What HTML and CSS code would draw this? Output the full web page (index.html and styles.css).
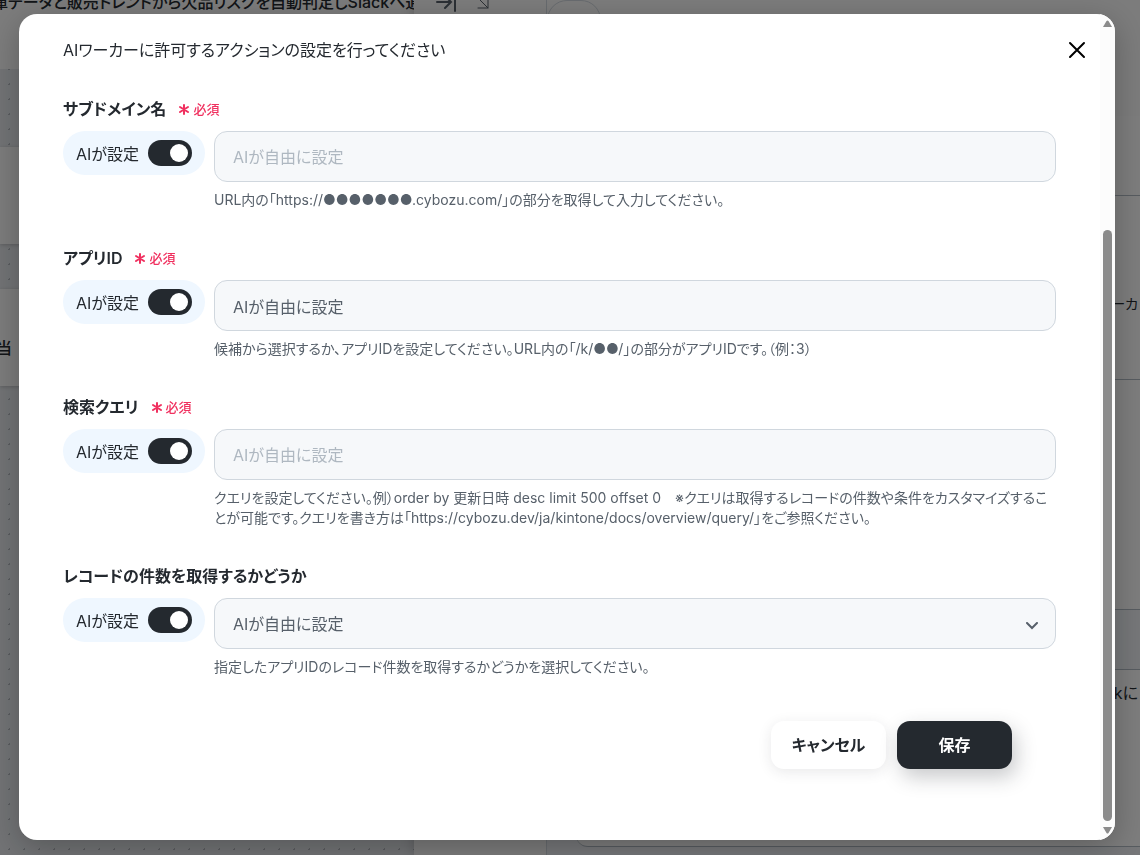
FILE: index.html
```
<!DOCTYPE html>
<html lang="ja">
  <head>
    <meta charset="UTF-8" />
    <meta name="viewport" content="width=device-width, initial-scale=1.0" />
    <title>アクションの設定</title>
    <link rel="stylesheet" href="styles.css">
  </head>
  <body>
    <div class="page" aria-hidden="true">
      <div class="workspace">
        <div class="workspace-title">庫データと販売トレンドから欠品リスクを自動判定しSlackへ通</div>
        <div class="canvas">
          <div class="node"></div>
          <div class="node">当</div>
        </div>
      </div>
      <div class="side">
        <svg width="24" height="24" viewBox="0 0 24 24"><path d="M3 12h14M11 6l6 6-6 6M21 3v18" /></svg>
        <svg class="thin" width="20" height="20" viewBox="0 0 20 20"><path d="M3 3l13 13M16 6v10H6" /></svg>
      </div>
      <div class="detail">
        <div class="tab"></div>
        <div class="detail-body">
          <div class="row row-first"></div>
          <div class="row row-worker">ワーカ</div>
          <div class="row row-blank"></div>
          <div class="row row-head"></div>
          <div class="row row-last">Slackに</div>
        </div>
      </div>
    </div>

    <div class="overlay">
      <div class="modal" role="dialog" aria-modal="true" aria-labelledby="modal-title">
        <form class="modal-content">
          <div class="modal-header">
            <h2 id="modal-title">AIワーカーに許可するアクションの設定を行ってください</h2>
            <button type="button" class="close-btn" aria-label="閉じる">
              <svg width="24" height="24" viewBox="0 0 24 24"><path d="M5 5l14 14M19 5L5 19" /></svg>
            </button>
          </div>

          <div class="field">
            <label class="field-label" for="subdomain">サブドメイン名
              <span class="required"><svg width="12" height="12" viewBox="0 0 12 12"><path d="M6 2v9M2 4l8 5M10 4l-8 5" /></svg>必須</span>
            </label>
            <div class="field-row">
              <label class="ai-toggle">AIが設定 <input type="checkbox" role="switch" checked></label>
              <div class="field-main">
                <input class="control" id="subdomain" type="text" placeholder="AIが自由に設定">
                <p class="hint">URL内の「https://●●●●●●●.cybozu.com/」の部分を取得して入力してください。</p>
              </div>
            </div>
          </div>

          <div class="field">
            <label class="field-label" for="app-id">アプリID
              <span class="required"><svg width="12" height="12" viewBox="0 0 12 12"><path d="M6 2v9M2 4l8 5M10 4l-8 5" /></svg>必須</span>
            </label>
            <div class="field-row">
              <label class="ai-toggle">AIが設定 <input type="checkbox" role="switch" checked></label>
              <div class="field-main">
                <input class="control" id="app-id" type="text" value="AIが自由に設定">
                <p class="hint">候補から選択するか、アプリIDを設定してください。URL内の「/k/●●/」の部分がアプリIDです。（例：3）</p>
              </div>
            </div>
          </div>

          <div class="field">
            <label class="field-label" for="query">検索クエリ
              <span class="required"><svg width="12" height="12" viewBox="0 0 12 12"><path d="M6 2v9M2 4l8 5M10 4l-8 5" /></svg>必須</span>
            </label>
            <div class="field-row">
              <label class="ai-toggle">AIが設定 <input type="checkbox" role="switch" checked></label>
              <div class="field-main">
                <input class="control" id="query" type="text" placeholder="AIが自由に設定">
                <p class="hint">クエリを設定してください。例）order by 更新日時 desc limit 500 offset 0　※クエリは取得するレコードの件数や条件をカスタマイズすることが可能です。クエリを書き方は「https://cybozu.dev/ja/kintone/docs/overview/query/」をご参照ください。</p>
              </div>
            </div>
          </div>

          <div class="field">
            <label class="field-label" for="count">レコードの件数を取得するかどうか</label>
            <div class="field-row">
              <label class="ai-toggle">AIが設定 <input type="checkbox" role="switch" checked></label>
              <div class="field-main">
                <div class="select-wrap">
                  <select class="control" id="count">
                    <option>AIが自由に設定</option>
                  </select>
                  <svg class="chevron" width="12" height="8" viewBox="0 0 12 8"><path d="M1 1l5 5 5-5" /></svg>
                </div>
                <p class="hint">指定したアプリIDのレコード件数を取得するかどうかを選択してください。</p>
              </div>
            </div>
          </div>

          <div class="actions">
            <button type="button" class="btn">キャンセル</button>
            <button type="submit" class="btn btn-primary">保存</button>
          </div>
        </form>
        <div class="scrollbar" aria-hidden="true">
          <svg width="9" height="7" viewBox="0 0 9 7"><path d="M3.500 1Q4.500 0 5.500 1L9 7H0z" /></svg>
          <div class="scroll-track"><div class="scroll-thumb"></div></div>
          <svg width="9" height="7" viewBox="0 0 9 7"><path d="M0 0h9L5.500 6Q4.500 7 3.500 6z" /></svg>
        </div>
      </div>
    </div>
  </body>
</html>
```
FILE: styles.css
```
* {
  box-sizing: border-box;
}
body {
  margin: 0;
  height: 100vh;
  overflow: hidden;
  font-family: Inter, "Noto Sans CJK JP", sans-serif;
  font-size: 16px;
  font-feature-settings: "palt";
  color: #24292f;
}
button,
input,
select {
  font: inherit;
  font-feature-settings: inherit;
  color: inherit;
}
svg {
  fill: none;
  stroke: currentColor;
  stroke-width: 2;
  stroke-linecap: round;
}

/* page behind the dialog */
.page {
  height: 100vh;
  display: flex;
  background-color: #f8f8f8;
}
.workspace {
  flex: 0 0 414px;
  min-width: 0;
  display: flex;
  flex-direction: column;
}
.workspace-title {
  height: 69px;
  line-height: 4px;
  text-indent: -8px;
  font-weight: 500;
  white-space: nowrap;
  overflow: hidden;
}
.canvas {
  flex: 1;
  padding-top: 78px;
  background-color: #e4e7eb;
  background-image: radial-gradient(circle, #b4b8be 1px, transparent 1px);
  background-size: 15px 15px;
  background-position: 2px -7px;
}
.node {
  height: 97px;
  margin-bottom: 45px;
  padding-top: 46px;
  text-indent: -4px;
  background-color: #f8f8f8;
  box-shadow: 0 1px 4px rgba(0, 0, 0, 0.2);
  font-weight: 500;
}
.side {
  flex: 0 0 132px;
  display: flex;
  gap: 14px;
  padding-left: 20px;
  box-shadow: 0 0 12px rgba(0, 0, 0, 0.2);
}
.side svg {
  margin-top: -10px;
  color: #57606a;
}
.side .thin {
  margin-top: -8px;
  stroke-width: 1;
}
.detail {
  flex: 1;
  display: flex;
  flex-direction: column;
  padding-bottom: 8px;
  background: linear-gradient(#f8f8f8 116px, #eceff3 116px);
  border-left: 1px solid #d0d7de;
}
.tab {
  width: 54px;
  height: 116px;
  border: 1px solid #d0d7de;
  border-radius: 20px;
}
.detail-body {
  flex: 1;
  display: flex;
  flex-direction: column;
  margin-left: 29px;
  background-color: #fafafa;
  border-bottom: 1px solid #afb8c1;
  border-bottom-left-radius: 12px;
}
.row {
  text-align: right;
  border-bottom: 1px solid #afb8c1;
}
.row-first {
  height: 80px;
}
.row-worker {
  height: 184px;
  padding: 97px 2px 0 0;
  font-size: 14px;
}
.row-blank {
  height: 230px;
}
.row-head {
  height: 60px;
  background-color: #eceff3;
}
.row-last {
  padding: 10px 2px 0 0;
  border-bottom: none;
}

/* dialog */
.overlay {
  position: fixed;
  inset: 0;
  padding: 14px 25px 15px 19px;
  background-color: rgba(0, 0, 0, 0.5);
}
.modal {
  height: 100%;
  display: flex;
  overflow: hidden;
  border-radius: 18px;
  background-color: #fff;
  box-shadow: 0 8px 32px rgba(0, 0, 0, 0.25);
}
.modal-content {
  flex: 1;
  min-width: 0;
  padding: 24px 11px 0 44px;
}
.modal-header {
  display: flex;
  align-items: center;
  justify-content: space-between;
  margin-bottom: 35px;
}
.modal-header h2 {
  margin: 0;
  font-size: 16px;
  font-weight: 400;
  line-height: 24px;
}
.close-btn {
  height: 24px;
  padding: 0;
  border: none;
  background: none;
  color: #000;
  cursor: pointer;
}
.field {
  margin: 0 33px 36px 0;
}
.field-label {
  display: flex;
  align-items: center;
  gap: 12px;
  margin-bottom: 10px;
  font-weight: 600;
  line-height: 24px;
}
.required {
  display: flex;
  align-items: center;
  gap: 3px;
  font-size: 13px;
  font-weight: 500;
  color: #f0305f;
}
.field-row {
  display: flex;
  align-items: flex-start;
  gap: 9px;
}
.ai-toggle {
  flex: none;
  display: flex;
  align-items: center;
  justify-content: space-between;
  width: 142px;
  height: 44px;
  padding: 0 13px;
  border-radius: 22px;
  background-color: #eff7ff;
}
.ai-toggle input {
  appearance: none;
  width: 44px;
  height: 26px;
  margin: 0;
  padding: 4px;
  border-radius: 13px;
  background-color: #24292f;
  cursor: pointer;
}
.ai-toggle input::before {
  content: "";
  display: block;
  width: 18px;
  height: 18px;
  border-radius: 50%;
  background-color: #fff;
}
.ai-toggle input:checked::before {
  margin-left: auto;
}
.field-main {
  flex: 1;
  min-width: 0;
}
.control {
  display: block;
  width: 100%;
  height: 51px;
  padding: 0 18px;
  border: 1px solid #d0d7de;
  border-radius: 13px;
  background-color: #f6f8fa;
  color: #57606a;
}
.control::placeholder {
  color: #afb8c1;
}
.select-wrap {
  position: relative;
}
.select-wrap .control {
  appearance: none;
}
.chevron {
  position: absolute;
  right: 18px;
  top: 24px;
  color: #57606a;
  pointer-events: none;
}
.hint {
  margin: 8px 0 0;
  font-size: 14px;
  line-height: 20px;
  color: #57606a;
}
.actions {
  display: flex;
  justify-content: flex-end;
  gap: 11px;
  margin: 44px 77px 0 0;
}
.btn {
  min-width: 115px;
  height: 48px;
  padding: 0 0 2px;
  border: none;
  border-radius: 13px;
  background-color: #fff;
  box-shadow: 0 3px 14px rgba(36, 41, 47, 0.1);
  font-weight: 600;
  cursor: pointer;
}
.btn-primary {
  background-color: #24292f;
  box-shadow: 4px 8px 20px rgba(36, 41, 47, 0.25);
  color: #fff;
}
.scrollbar {
  flex: none;
  display: flex;
  flex-direction: column;
  align-items: center;
  width: 15px;
  padding: 6px 0;
  background-color: #fcfcfc;
}
.scrollbar svg {
  fill: #8b8b8b;
  stroke: none;
}
.scroll-track {
  flex: 1;
  display: flex;
  align-items: flex-end;
  padding: 6px 0;
}
.scroll-thumb {
  width: 9px;
  height: 75%;
  border-radius: 5px;
  background-color: #8b8b8b;
}
```
